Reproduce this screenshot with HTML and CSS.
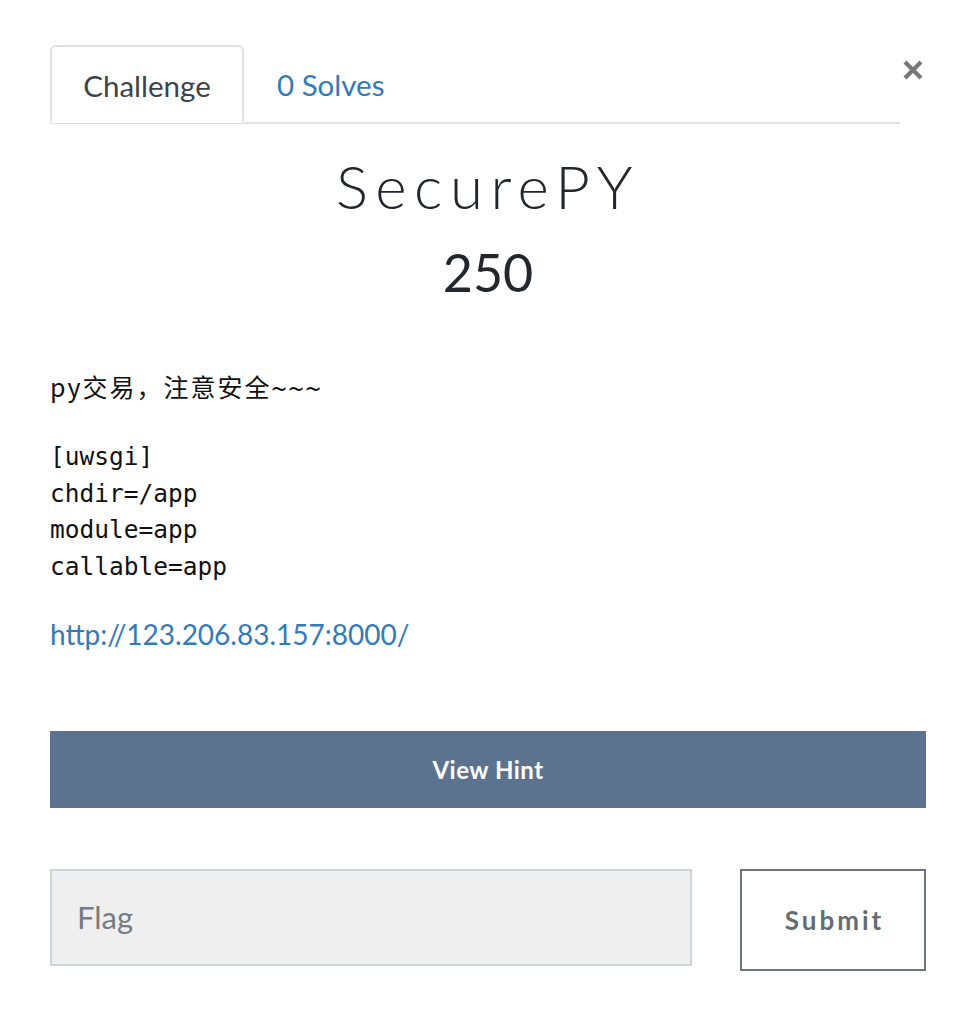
FILE: index.html
```html
<!DOCTYPE html>
<html>
<head>
<meta charset="utf-8">
<link rel="stylesheet" href="styles.css">
</head>
<body>
<div class="modal">
  <div class="header">
    <nav class="tabs">
      <div class="tab active">Challenge</div>
      <div class="tab link">0 Solves</div>
    </nav>
    <button class="close" aria-label="Close">
      <svg width="22" height="22" viewBox="0 0 22 22"><path d="M3 3 L19 19 M19 3 L3 19" stroke="#777" stroke-width="4.2" stroke-linecap="butt"/></svg>
    </button>
  </div>
  <h2 class="title">SecurePY</h2>
  <h3 class="value">250</h3>
  <div class="desc">
    <p class="lead">py交易，注意安全<span class="tilde">~~~</span></p>
    <pre class="code">[uwsgi]
chdir=/app
module=app
callable=app</pre>
    <p class="link-line"><a class="url" href="#">http://123.206.83.157:8000/</a></p>
  </div>
  <button class="hint">View Hint</button>
  <form class="flag-row">
    <div class="flag-input">Flag</div>
    <button type="button" class="submit">Submit</button>
  </form>
</div>
</body>
</html>
```

FILE: styles.css
```css
html, body {
  margin: 0;
  padding: 0;
  background: #fff;
}
body {
  font-family: Lato, "Noto Sans CJK SC", sans-serif;
  color: #212529;
}
.modal {
  width: 876px;
  padding: 45px 42px 0 50px;
}
.header {
  display: flex;
  align-items: flex-start;
}
.tabs {
  display: flex;
  width: 850px;
  border-bottom: 2px solid #dee2e6;
  height: 77px;
}
.tab {
  font-size: 29.5px;
  padding: 0 33px;
  line-height: 80px;
  height: 78px;
  box-sizing: border-box;
}
.tab.active {
  border: 2px solid #dee2e6;
  border-bottom-color: #fff;
  border-radius: 6px 6px 0 0;
  color: #3d4349;
  width: 194px;
  text-align: center;
  padding: 0;
  line-height: 78px;
}
.tab.link {
  color: #337ab7;
}
.close {
  background: none;
  border: none;
  padding: 0;
  margin: 14px 0 0 2px;
  width: 22px;
  height: 22px;
  display: flex;
}
.title {
  font-family: "Lato", sans-serif;
  font-weight: 300;
  font-size: 60px;
  letter-spacing: 7.5px;
  text-align: center;
  margin: 20px 0 0;
  line-height: 84px;
  color: #23272b;
}
.value {
  font-weight: 400;
  font-size: 52px;
  text-align: center;
  margin: 12px 0 0;
  line-height: 64px;
  color: #23272b;
}
.desc {
  margin-top: 62px;
}
.lead {
  font-family: "Noto Sans CJK SC", sans-serif;
  font-size: 25px;
  letter-spacing: 2px;
  margin: 0;
  line-height: 40px;
  color: #111;
}
.tilde {
  font-family: "DejaVu Sans Mono", monospace;
  letter-spacing: 2px;
}
.code {
  font-family: "DejaVu Sans Mono", monospace;
  font-size: 24.5px;
  line-height: 36.5px;
  margin: 30px 0 0;
  color: #111;
}
.link-line {
  margin: 29px 0 0;
  font-size: 28px;
  line-height: 40px;
}
.url {
  color: #337ab7;
  text-decoration: none;
}
.hint {
  display: block;
  width: 876px;
  height: 77px;
  margin-top: 77px;
  background: #5c738f;
  border: none;
  color: #fff;
  font-family: Lato, sans-serif;
  font-weight: 700;
  font-size: 24px;
  letter-spacing: 0.5px;
}
.flag-row {
  display: flex;
  justify-content: space-between;
  align-items: flex-start;
  margin-top: 61px;
}
.flag-input {
  width: 642px;
  height: 97px;
  box-sizing: border-box;
  background: #efefef;
  border: 2px solid #cfd4d9;
  font-size: 31px;
  color: #757c82;
  padding-left: 25px;
  line-height: 92px;
}
.submit {
  width: 186px;
  height: 102px;
  box-sizing: border-box;
  background: #fff;
  border: 2px solid #6c757d;
  color: #656d74;
  font-family: Lato, sans-serif;
  font-weight: 700;
  font-size: 26px;
  letter-spacing: 3px;
  text-indent: 3px;
}
```
